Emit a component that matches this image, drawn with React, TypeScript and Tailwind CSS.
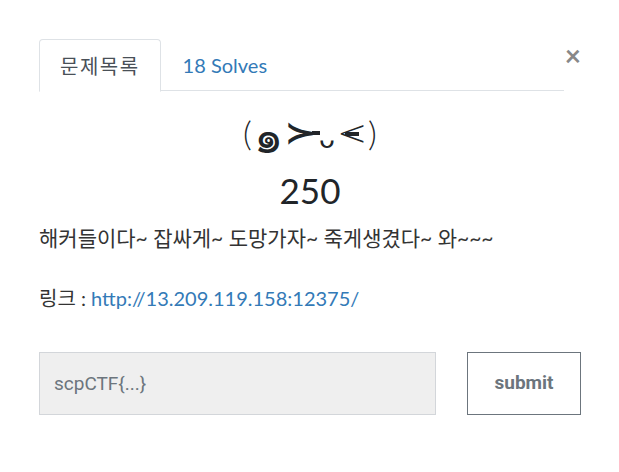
import React from 'react';

const Kaomoji = () => (
  <div className="flex justify-center items-center h-[44px] text-[#212529]">
    <span className="text-[34px] leading-[44px] font-light">(</span>
    <span className="text-[46px] leading-[44px] ml-[2px] mt-[8px] font-['DejaVu_Sans',sans-serif]">๑</span>
    <span className="text-[30px] leading-[42px] font-bold ml-[5px] scale-x-[1.3] font-['DejaVu_Sans',sans-serif]">≻</span>
    <span className="inline-block w-[8px] h-[4px] bg-[#212529] -ml-[1px]" />
    <span className="text-[26px] leading-[40px] mt-[12px] -ml-[1px] font-['DejaVu_Sans',sans-serif]">ᴗ</span>
    <span className="relative ml-[2px] flex items-center">
      <span className="text-[36px] leading-[42px] font-extralight font-['DejaVu_Sans',sans-serif]">&lt;</span>
      <span className="absolute left-[8px] top-[20px] w-[14px] h-[4px] bg-[#212529]" />
    </span>
    <span className="text-[34px] leading-[44px] font-light ml-[1px]">)</span>
  </div>
);

const App = () => {
  return (
    <div className="w-[619px] h-[472px] bg-white text-[#212529] font-[Lato,'Noto_Sans_CJK_KR',sans-serif]">
      <div className="pt-[39px] pl-[39px] pr-[38px]">
        <div className="flex items-start">
          <div className="flex-1 flex border-b border-[#dee2e6] h-[52px]">
            <div className="h-[53px] px-[20px] flex items-center border border-[#dee2e6] border-b-white rounded-t-[4px] bg-white text-[20px] tracking-[1.5px] text-[#495057]">
              문제목록
            </div>
            <div className="h-[52px] px-[22px] flex items-center text-[20px] text-[#337ab7]">
              18 Solves
            </div>
          </div>
          <button className="w-[17px] mt-[2px] text-[28px] leading-none font-bold text-[#888] text-right">
            ×
          </button>
        </div>

        <div className="mt-[20px]">
          <Kaomoji />
        </div>
        <div className="text-center mt-[13px] text-[35px] leading-[44px]">250</div>

        <p className="mt-[11px] text-[21px] leading-[30px] text-[#333]">
          해커들이다~ 잡싸게~ 도망가자~ 죽게생겼다~ 와~~~
        </p>
        <p className="mt-[30px] text-[20px] leading-[30px] text-[#333]">
          링크 : <a className="text-[#337ab7]" href="#">http://13.209.119.158:12375/</a>
        </p>

        <div className="flex mt-[39px] gap-[31px] font-[Roboto,sans-serif]">
          <input
            className="w-[397px] h-[63px] bg-[#efefef] border border-[#d3d6da] px-[14px] text-[19px] placeholder:text-[#6c757d] outline-none"
            placeholder="scpCTF{...}"
          />
          <button className="w-[114px] h-[63px] border border-[#6c757d] text-[19px] font-bold text-[#6c757d] bg-white">
            submit
          </button>
        </div>
      </div>
    </div>
  );
};

export default App;
